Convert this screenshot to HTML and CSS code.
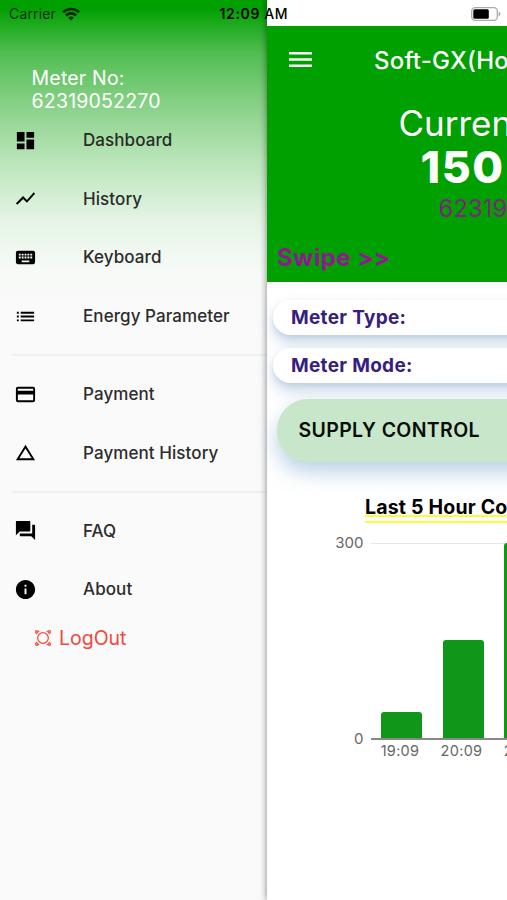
FILE: index.html
```html
<!DOCTYPE html>
<html lang="en">
<head>
<meta charset="utf-8">
<title>Soft-GX</title>
<link rel="stylesheet" href="styles.css">
</head>
<body>
<div class="screen">
  <nav class="drawer">
    <div class="account">Meter No:<br>62319052270</div>
    <a class="item"><svg viewBox="0 0 24 24"><path d="M3 13h8V3H3v10zm0 8h8v-6H3v6zm10 0h8V11h-8v10zm0-18v6h8V3h-8z"/></svg><span>Dashboard</span></a>
    <a class="item"><svg viewBox="0 0 24 24"><path d="M3.5 18.49l6-6.01 4 4L22 6.92l-1.41-1.41-7.09 7.97-4-4L2 16.99z"/></svg><span>History</span></a>
    <a class="item"><svg viewBox="0 0 24 24"><path d="M20 5H4c-1.1 0-2 .9-2 2v10c0 1.100.9 2 2 2h16c1.100 0 2-.9 2-2V7c0-1.100-.9-2-2-2zm-9 3h2v2h-2V8zm0 3h2v2h-2v-2zM8 8h2v2H8V8zm0 3h2v2H8v-2zm-1 2H5v-2h2v2zm0-3H5V8h2v2zm9 7H8v-2h8v2zm0-4h-2v-2h2v2zm0-3h-2V8h2v2zm3 3h-2v-2h2v2zm0-3h-2V8h2v2z"/></svg><span>Keyboard</span></a>
    <a class="item"><svg viewBox="0 0 24 24"><path d="M3 13h2v-2H3v2zm0 4h2v-2H3v2zm0-8h2V7H3v2zm4 4h14v-2H7v2zm0 4h14v-2H7v2zM7 7v2h14V7H7z"/></svg><span>Energy Parameter</span></a>
    <div class="divider"></div>
    <a class="item"><svg viewBox="0 0 24 24"><path d="M20 4H4c-1.110 0-2 .89-2 2v12c0 1.110.89 2 2 2h16c1.110 0 2-.89 2-2V6c0-1.110-.89-2-2-2zm0 14H4v-6h16v6zm0-10H4V6h16v2z"/></svg><span>Payment</span></a>
    <a class="item"><svg viewBox="0 0 24 24"><path d="M12 7.770L18.390 18H5.610L12 7.770M12 4L2 20h20L12 4z"/></svg><span>Payment History</span></a>
    <div class="divider"></div>
    <a class="item"><svg viewBox="0 0 24 24"><path d="M21 6h-2v9H6v2c0 .55.45 1 1 1h11l4 4V7c0-.55-.45-1-1-1zm-4 6V3c0-.55-.45-1-1-1H3c-.55 0-1 .45-1 1v14l4-4h10c.55 0 1-.45 1-1z"/></svg><span>FAQ</span></a>
    <a class="item"><svg viewBox="0 0 24 24"><path d="M12 2C6.480 2 2 6.480 2 12s4.480 10 10 10 10-4.480 10-10S17.520 2 12 2zm1 15h-2v-6h2v6zm0-8h-2V7h2v2z"/></svg><span>About</span></a>
    <a class="logout"><svg viewBox="0 0 16 16"><circle cx="8" cy="8" r="5.300"/><path d="M.8 4.200L4.200.8M11.800.8l3.400 3.400M15.200 11.800l-3.400 3.400M4.200 15.200L.8 11.800M.8 3V.8H3M13 .8h2.200V3M15.200 13v2.200H13M3 15.200H.8V13"/></svg><span>LogOut</span></a>
  </nav>
  <main class="page">
    <header class="hero">
      <div class="appbar">
        <svg viewBox="0 0 24 16"><path d="M0 0h24v2.600H0zM0 6.500h24v2.600H0zM0 13h24v2.600H0z"/></svg>
        <span>Soft-GX(Home)</span>
      </div>
      <div class="current">Current</div>
      <div class="amount">150</div>
      <div class="number">62319052270</div>
      <div class="swipe">Swipe &gt;&gt;</div>
    </header>
    <div class="pill">Meter Type:</div>
    <div class="pill">Meter Mode:</div>
    <div class="supply">SUPPLY CONTROL</div>
    <h2><span>Last 5 Hour Consumption</span></h2>
    <div class="chart">
      <div class="scale"><span>300</span><span>0</span></div>
      <div class="plot">
        <div class="slot"><div class="bar" style="height:26px"></div><span>19:09</span></div>
        <div class="slot"><div class="bar" style="height:98px"></div><span>20:09</span></div>
        <div class="slot"><div class="bar" style="height:195px"></div><span>21:09</span></div>
      </div>
    </div>
  </main>
  <div class="status">
    <span class="carrier">Carrier</span>
    <svg class="wifi" viewBox="0 0 18 14"><path d="M9 13.600L6.200 10.800a4 4 0 0 1 5.600 0zM4.900 9.400L3 7.500a8.500 8.500 0 0 1 12 0l-1.900 1.900a5.800 5.800 0 0 0-8.200 0zM1.900 6.300L0 4.400a12.700 12.700 0 0 1 18 0l-1.900 1.900a10 10 0 0 0-14.200 0z"/></svg>
    <span class="clock">12:09 <span class="meridiem">AM</span></span>
    <svg class="battery" viewBox="0 0 30 14"><rect x=".7" y=".7" width="25.600" height="12.600" rx="3.500" fill="#fff" stroke="#aaa" stroke-width="1.300"/><rect x="2.300" y="2.300" width="15.500" height="9.400" rx="1.500"/><path d="M27.600 4.700q2 .8 2 2.300t-2 2.300z" fill="#aaa"/></svg>
  </div>
</div>
</body>
</html>
```
FILE: styles.css
```css
* { box-sizing: border-box; }
body { margin: 0; font-family: Inter, "Liberation Sans", sans-serif; }
.screen {
  position: relative;
  width: 507px;
  height: 900px;
  overflow: hidden;
  display: grid;
  grid-template-columns: 266.500px 240.500px;
}
.drawer {
  padding-top: 67px;
  background: linear-gradient(#00a000 0, #00a000 8px, #50bd50 52px, #83cf83 100px, #b9e5b9 160px, #e5f4e5 220px, #f7faf7 270px, #fafafa 320px);
}
.account {
  height: 44px;
  padding-left: 31.500px;
  color: #fff;
  font-size: 19.500px;
  line-height: 23px;
  letter-spacing: .2px;
}
.item {
  display: flex;
  align-items: center;
  height: 58.600px;
  padding-left: 14px;
  gap: 46px;
  color: #222;
  font-size: 17px;
  font-weight: 500;
  letter-spacing: .08px;
}
.item svg { width: 23px; height: 23px; fill: #000; }
.item span { opacity: .95; }
.divider { display: flex; align-items: center; height: 19.500px; padding-left: 12px; }
.divider::after { content: ""; flex: 1; height: 1.500px; background: #f0f0f0; }
.logout {
  display: flex;
  align-items: center;
  gap: 8.500px;
  height: 39px;
  padding-left: 34.500px;
  color: #f0493e;
  font-size: 19.500px;
}
.logout svg { width: 16px; height: 16px; fill: none; stroke: #f0493e; stroke-width: 1.200; }
.page {
  min-width: 0;
  padding-top: 25.500px;
  background: #fff;
  box-shadow: 0 0 7px rgba(0, 0, 0, .5);
  white-space: nowrap;
}
.hero { height: 256px; overflow: hidden; background: #00a000; color: #fff; }
.appbar {
  display: flex;
  align-items: center;
  height: 69px;
  padding-left: 22.500px;
  gap: 62px;
  font-size: 24px;
  font-weight: 500;
  letter-spacing: .2px;
}
.appbar svg { flex: none; width: 23px; height: 15.500px; fill: #fff; }
.current { padding-left: 132px; font-size: 35px; line-height: 56px; }
.amount { padding-left: 154px; font-size: 44.500px; line-height: 33px; font-weight: 800; letter-spacing: 1.500px; }
.number { padding-left: 172px; color: #7c267c; font-size: 24px; line-height: 50px; }
.swipe { padding-left: 10.500px; color: #901890; font-size: 24px; line-height: 48px; font-weight: 700; letter-spacing: .4px; }
.pill {
  height: 35.500px;
  margin: 18px -40px 0 6.500px;
  padding-left: 18px;
  border-radius: 18px;
  background: #fff;
  box-shadow: 0 8px 15px rgba(130, 170, 205, .42), 0 3px 5px rgba(120, 140, 160, .2);
  color: #35207f;
  font-size: 19px;
  line-height: 36.500px;
  font-weight: 700;
  letter-spacing: .3px;
}
.pill + .pill { margin-top: 12.500px; }
.supply {
  height: 62.500px;
  margin: 16px -50px 0 10px;
  padding-left: 22px;
  border-radius: 31px;
  background: #c8e6c9;
  box-shadow: 0 10px 20px rgba(120, 165, 205, .5);
  color: #080d08;
  font-size: 19.500px;
  line-height: 63px;
  font-weight: 600;
  letter-spacing: .35px;
}
h2 { margin: 32px 0 0 98.500px; color: #000; font-size: 19.500px; line-height: 26px; font-weight: 700; letter-spacing: .2px; }
h2 span { display: inline-block; height: 29px; background: linear-gradient(#fffb35, #fffb35) 0 21.500px / 100% 2px no-repeat; border-bottom: 2px solid #fffb35; }
.chart { display: flex; margin-top: 20px; color: #666; font-size: 15px; }
.scale {
  flex: none;
  width: 97px;
  height: 214px;
  margin-top: -9px;
  display: flex;
  flex-direction: column;
  justify-content: space-between;
  align-items: flex-end;
  line-height: 18px;
}
.plot {
  display: flex;
  height: 197px;
  margin-left: 7px;
  padding-left: 10.500px;
  gap: 20.500px;
  border-top: 1px solid #e8e8e8;
  border-bottom: 2px solid #888;
  flex: none;
}
.slot { width: 41px; display: flex; flex-direction: column; align-items: center; justify-content: flex-end; }
.bar { flex: none; width: 41px; border-radius: 3px 3px 0 0; background: #109618; }
.slot span { height: 0; margin-left: -3px; font-size: 14.500px; line-height: 26px; letter-spacing: .3px; }
.status {
  position: absolute;
  inset: 0 0 auto;
  display: flex;
  align-items: center;
  height: 27px;
  padding: 0 6px 0 9px;
  color: #000;
  font-size: 14px;
}
.carrier { color: #083008; width: 53px; letter-spacing: .15px; }
.wifi { width: 18px; height: 14px; fill: #002b00; }
.clock { margin-left: 139.500px; font-weight: 600; letter-spacing: .65px; }
.meridiem { font-weight: 500; }
.battery { width: 30px; height: 14px; margin-left: auto; }
```
